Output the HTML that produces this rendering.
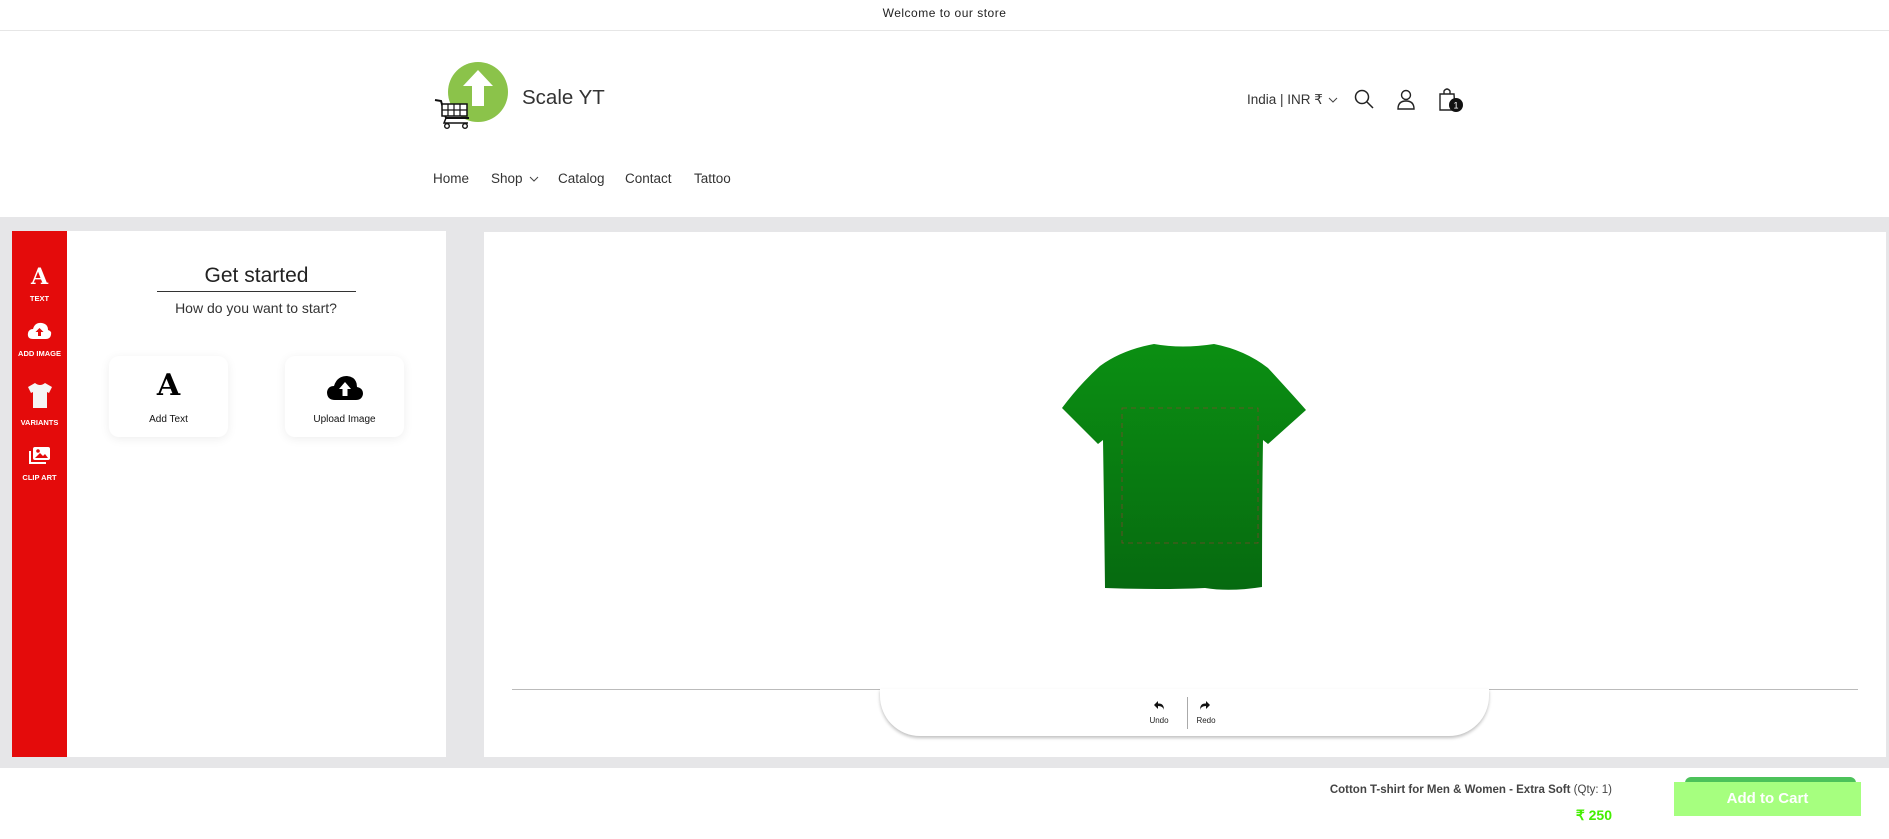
<!DOCTYPE html>
<html><head><meta charset="utf-8"><style>
*{margin:0;padding:0;box-sizing:border-box}
body{width:1889px;height:839px;overflow:hidden;background:#fff;font-family:"Liberation Sans",sans-serif;position:relative;color:#222}
.a{position:absolute}
.nav{font-size:13.5px;color:#333;top:171px}
.sb{color:#fff;font-weight:bold;font-size:7.5px;width:55px;text-align:center;left:12px}
.card{background:#fff;border-radius:10px;box-shadow:0 2px 10px rgba(0,0,0,.07);width:119px;height:81px;top:356px}
.card span{position:absolute;left:0;right:0;top:58px;text-align:center;font-size:10px;color:#111}
</style></head><body>
<div class="a" style="left:0;top:0;width:1889px;height:31px;border-bottom:1px solid #e6e6e6;text-align:center;font-size:12px;line-height:26px;color:#222;letter-spacing:.5px">Welcome to our store</div>
<svg class="a" style="left:432px;top:58px" width="80" height="78" viewBox="0 0 80 78">
<circle cx="46" cy="34" r="30" fill="#8bc34a"/>
<path d="M46 12 L61 28 H52 V48 H40 V28 H31 Z" fill="#fff"/>
<path d="M3 42 L9 43 L14 60 H37" stroke="#111" stroke-width="2" fill="none"/>
<rect x="10" y="46" width="25" height="12" fill="#fff" stroke="#111" stroke-width="1.5"/>
<path d="M16 46V58M22 46V58M28 46V58M10 52H35" stroke="#111" stroke-width="1.2"/>
<path d="M14 60 L12 65 H36" stroke="#111" stroke-width="1.5" fill="none"/>
<circle cx="15" cy="68" r="2.3" fill="none" stroke="#111" stroke-width="1.4"/>
<circle cx="33" cy="68" r="2.3" fill="none" stroke="#111" stroke-width="1.4"/>
</svg>
<div class="a" style="left:522px;top:86px;font-size:20.5px;color:#333">Scale YT</div>
<div class="a nav" style="left:433px">Home</div>
<div class="a nav" style="left:491px">Shop</div>
<svg class="a" style="left:529px;top:175px" width="10" height="8"><path d="M1 2 L5 6 L9 2" stroke="#444" fill="none"/></svg>
<div class="a nav" style="left:558px">Catalog</div>
<div class="a nav" style="left:625px">Contact</div>
<div class="a nav" style="left:694px">Tattoo</div>
<div class="a" style="left:1247px;top:92px;font-size:13.5px;color:#333">India | INR ₹</div>
<svg class="a" style="left:1328px;top:96px" width="10" height="8"><path d="M1 2 L5 6 L9 2" stroke="#444" fill="none"/></svg>
<svg class="a" style="left:1354px;top:89px" width="20" height="20"><circle cx="8" cy="8" r="6.5" stroke="#222" stroke-width="1.5" fill="none"/><path d="M13 13 L19 19" stroke="#222" stroke-width="1.5"/></svg>
<svg class="a" style="left:1396px;top:89px" width="20" height="21"><circle cx="10" cy="6" r="4.5" stroke="#222" stroke-width="1.4" fill="none"/><path d="M2 20 Q2 12 10 12 Q18 12 18 20 Z" stroke="#222" stroke-width="1.4" fill="none"/></svg>
<svg class="a" style="left:1438px;top:86px" width="26" height="28"><path d="M2 8 H16 L17 24 H2 Z" stroke="#222" stroke-width="1.4" fill="none"/><path d="M6 8 V5 Q9 1 12 5 V8" stroke="#222" stroke-width="1.4" fill="none"/><circle cx="18" cy="19" r="7" fill="#111"/><text x="18" y="22.5" font-size="9" fill="#fff" text-anchor="middle" font-family="Liberation Sans">1</text></svg>
<div class="a" style="left:0;top:217px;width:1889px;height:551px;background:#e6e6e8"></div>
<div class="a" style="left:12px;top:231px;width:434px;height:526px;background:#fff"></div>
<div class="a" style="left:12px;top:231px;width:55px;height:526px;background:#e40b0b"></div>
<div class="a sb" style="top:264px;font-size:22px;font-family:'DejaVu Serif',serif">A</div>
<div class="a sb" style="top:294px">TEXT</div>
<svg class="a" style="left:27px;top:322px" width="25" height="18"><path d="M6 17 Q0 17 1 11 Q2 7 6 7 Q8 0 15 1 Q21 2 21 8 Q25 9 24 13 Q23 17 19 17 Z" fill="#fff"/><path d="M12.5 6 L16.5 10 H14 V14 H11 V10 H8.5 Z" fill="#e40b0b"/></svg>
<div class="a sb" style="top:349px">ADD IMAGE</div>
<svg class="a" style="left:27px;top:382px" width="26" height="27"><path d="M8 1 Q13 5 18 1 L25 5 L22 11 L20 10 V26 H6 V10 L4 11 L1 5 Z" fill="#f5f5f5"/></svg>
<div class="a sb" style="top:418px">VARIANTS</div>
<svg class="a" style="left:28px;top:446px" width="24" height="20"><rect x="5" y="1" width="17" height="13" rx="2" fill="#fff"/><path d="M2 5 V17 H18" stroke="#fff" stroke-width="2" fill="none"/><path d="M7 12 L12 7 L15 10 L17 8 L20 12 Z" fill="#e40b0b"/><circle cx="10" cy="5" r="1.8" fill="#e40b0b"/></svg>
<div class="a sb" style="top:473px">CLIP ART</div>
<div class="a" style="left:157px;top:264px;width:199px;text-align:center;font-size:21px;color:#222">Get started</div>
<div class="a" style="left:157px;top:291px;width:199px;height:1px;background:#333"></div>
<div class="a" style="left:120px;top:300px;width:272px;text-align:center;font-size:14px;color:#333">How do you want to start?</div>
<div class="a card" style="left:109px"><div style="position:absolute;left:0;right:0;top:12px;text-align:center;font:bold 30px 'DejaVu Serif',serif;color:#000">A</div><span>Add Text</span></div>
<div class="a card" style="left:285px"><svg style="position:absolute;left:42px;top:19px" width="36" height="26"><path d="M8 25 Q0 25 0 17 Q1 11 7 11 Q10 1 20 1 Q30 2 30 12 Q36 13 36 19 Q35 25 29 25 Z" fill="#000"/><path d="M18 7 L24 14 H20.5 V21 H15.5 V14 H12 Z" fill="#fff"/></svg><span>Upload Image</span></div>
<div class="a" style="left:484px;top:232px;width:1402px;height:525px;background:#fff"></div>
<svg class="a" style="left:1060px;top:342px" width="248" height="250" viewBox="0 0 248 250">
<defs><linearGradient id="g" x1="0" y1="0" x2="0" y2="1"><stop offset="0" stop-color="#0b8f12"/><stop offset="1" stop-color="#066a10"/></linearGradient></defs>
<path d="M94 2 Q122 7 154 2 Q185 8 208 26 Q232 52 246 68 L208 102 L203 98 Q202 160 202 245 Q170 250 145 246 Q100 248 45 246 Q44 160 43 98 L38 102 L2 66 Q20 42 40 24 Q62 8 94 2 Z" fill="url(#g)"/>
<rect x="62" y="66" width="136" height="135" fill="none" stroke="#a33" stroke-width="0.8" stroke-dasharray="5 4" opacity=".7"/>
</svg>
<div class="a" style="left:512px;top:689px;width:1346px;height:1px;background:#bbb"></div>
<div class="a" style="left:880px;top:689px;width:609px;height:47px;background:#fff;border-radius:0 0 40px 40px;box-shadow:0 2px 3px rgba(0,0,0,.25)"></div>
<svg class="a" style="left:1153px;top:700px" width="12" height="11"><path d="M5 1 L1 5 L5 9 V6 Q10 6 11 10 Q11 3 5 3.5 Z" fill="#111"/></svg>
<div class="a" style="left:1143px;top:716px;width:32px;text-align:center;font-size:8px;color:#222">Undo</div>
<div class="a" style="left:1187px;top:697px;width:1px;height:32px;background:#aaa"></div>
<svg class="a" style="left:1199px;top:700px" width="12" height="11"><path d="M7 1 L11 5 L7 9 V6 Q2 6 1 10 Q1 3 7 3.5 Z" fill="#111"/></svg>
<div class="a" style="left:1190px;top:716px;width:32px;text-align:center;font-size:8px;color:#222">Redo</div>
<div class="a" style="left:1000px;top:784px;width:612px;text-align:right;font-size:11.5px;color:#444"><b>Cotton T-shirt for Men &amp; Women - Extra Soft</b> (Qty: 1)</div>
<div class="a" style="left:1500px;top:807px;width:112px;text-align:right;font-size:14px;font-weight:bold;color:#44ee00">₹ 250</div>
<div class="a" style="left:1685px;top:777px;width:171px;height:8px;background:#4cc25a;border-radius:6px 6px 0 0"></div>
<div class="a" style="left:1674px;top:782px;width:187px;height:34px;background:#a6ff7f;color:#fff;font-weight:bold;font-size:15px;text-align:center;line-height:34px">Add to Cart</div>
</body></html>
